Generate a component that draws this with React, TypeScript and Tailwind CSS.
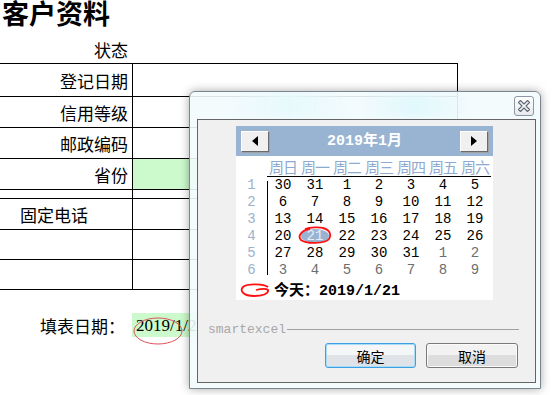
import React from 'react';

const cjk = "font-['Noto_Sans_CJK_SC',sans-serif]";
const mono = "font-['Liberation_Mono','Noto_Sans_CJK_SC',monospace]";

const rows = [
  { label: '登记日期', h: 'h-[33px]' },
  { label: '信用等级', h: 'h-[31px]' },
  { label: '邮政编码', h: 'h-[31px]' },
  { label: '省份', h: 'h-[31px]', green: true },
  { label: '', h: 'h-[9px]' },
  { label: '固定电话', h: 'h-[31px]', left: true },
  { label: '', h: 'h-[30px]' },
  { label: '', h: 'h-[30px]' },
];

const weekDays = ['周日', '周一', '周二', '周三', '周四', '周五', '周六'];

// [day, isOtherMonth]
const weeks: [number, boolean][][] = [
  [[30, false], [31, false], [1, false], [2, false], [3, false], [4, false], [5, false]],
  [[6, false], [7, false], [8, false], [9, false], [10, false], [11, false], [12, false]],
  [[13, false], [14, false], [15, false], [16, false], [17, false], [18, false], [19, false]],
  [[20, false], [21, false], [22, false], [23, false], [24, false], [25, false], [26, false]],
  [[27, false], [28, false], [29, false], [30, false], [31, false], [1, true], [2, true]],
  [[3, true], [4, true], [5, true], [6, true], [7, true], [8, true], [9, true]],
];

function ArrowButton({ dir }: { dir: 'left' | 'right' }) {
  return (
    <div className="w-[28px] h-[21px] bg-[#f0f0f0] border border-t-white border-l-white border-r-[#6a6a6a] border-b-[#6a6a6a] shadow-[1px_1px_0_#a0a0a0] flex items-center justify-center">
      <svg width="6" height="10" viewBox="0 0 6 10">
        {dir === 'left' ? <path d="M6 0 L0 5 L6 10 Z" fill="#000" /> : <path d="M0 0 L6 5 L0 10 Z" fill="#000" />}
      </svg>
    </div>
  );
}

function Calendar() {
  return (
    <div className="w-[257px] bg-white">
      <div className="h-[30px] bg-[#98b4d2] flex items-center justify-between px-[5px]">
        <ArrowButton dir="left" />
        <span className={`${mono} text-[15px] font-bold text-white leading-none`}>2019年1月</span>
        <ArrowButton dir="right" />
      </div>
      <div className="flex">
        <div className="w-[31px] shrink-0" />
        <div className="flex border-b border-black h-[21px] items-center">
          {weekDays.map((d) => (
            <div key={d} className={`${cjk} w-[32px] text-center text-[15px] leading-none text-[#8eaad0] tracking-[-1px]`}>
              {d}
            </div>
          ))}
        </div>
      </div>
      <div className="flex">
        <div className="w-[31px] shrink-0 flex flex-col">
          {weeks.map((_, i) => (
            <div key={i} className={`${mono} h-[17px] text-[14px] leading-[17px] text-center text-[#9cb2cc]`}>
              {i + 1}
            </div>
          ))}
        </div>
        <div className="w-px bg-black my-[4px]" />
        <div className="flex flex-col -ml-px">
          {weeks.map((w, i) => (
            <div key={i} className="flex h-[17px]">
              {w.map(([d, other], j) => {
                const today = i === 3 && j === 1;
                return (
                  <div
                    key={j}
                    className={`${mono} relative w-[32px] text-center text-[14px] leading-[17px] ${other ? 'text-[#6e6e6e]' : 'text-black'}`}
                  >
                    {today && (
                      <svg className="absolute -left-[1px] -top-[2px]" width="34" height="20" viewBox="0 0 34 20">
                        <ellipse cx="17" cy="10" rx="14" ry="7" fill="#98b4d2" />
                        <path
                          d="M7 3 C12 1, 22 1, 26 2 M24 2 C31 3, 34 8, 31 13 C27 18, 8 18, 3 14 C-1 10, 4 4, 12 3"
                          fill="none"
                          stroke="#ff1010"
                          strokeWidth="1.8"
                        />
                      </svg>
                    )}
                    <span className={`relative ${today ? 'text-[#e6edf5]' : ''}`}>{d}</span>
                  </div>
                );
              })}
            </div>
          ))}
        </div>
      </div>
      <div className="h-[21px] flex items-center pl-[4px] gap-[4px]">
        <svg width="30" height="16" viewBox="0 0 30 16">
          <path
            d="M28 5 C24 2, 8 1, 3 5 C-1 9, 4 14, 14 14 C22 14, 29 12, 28 8 C26 6, 20 7, 16 8"
            fill="none"
            stroke="#ff1010"
            strokeWidth="1.8"
          />
        </svg>
        <span className="text-[15px] font-bold leading-none text-black">
          <span className={cjk}>今天：</span>
          <span className={mono}>2019/1/21</span>
        </span>
      </div>
    </div>
  );
}

function CloseButton() {
  return (
    <div className="w-[20px] h-[20px] rounded-[3px] border border-[#8c97a3] bg-gradient-to-b from-white to-[#e8eaee] flex items-center justify-center">
      <svg width="14" height="14" viewBox="0 0 14 14">
        <path
          d="M1.5 3.5 L3.5 1.5 L7 5 L10.5 1.5 L12.5 3.5 L9 7 L12.5 10.5 L10.5 12.5 L7 9 L3.5 12.5 L1.5 10.5 L5 7 Z"
          fill="#f4f4f4"
          stroke="#5f6b78"
          strokeWidth="1.1"
          strokeLinejoin="round"
        />
      </svg>
    </div>
  );
}

function Dialog() {
  return (
    <div className="absolute left-[189px] top-[91px] w-[352px] h-[298px] rounded-t-[6px] border border-[#7d868e] bg-[#f2fbfd]/90 shadow-[0_0_10px_rgba(0,0,0,0.35)] flex flex-col pl-[7px] pr-[4px] pb-[5px] overflow-hidden">
      <div className="absolute left-[40px] top-0 w-[120px] h-[26px] bg-gradient-to-r from-transparent via-[#e6f9fc] to-transparent rounded-full blur-[4px]" />
      <div className="absolute left-[170px] top-[2px] w-[110px] h-[24px] bg-gradient-to-r from-transparent via-[#e0f8fc] to-transparent rounded-full blur-[5px]" />
      <div className="relative h-[27px] shrink-0 flex justify-end items-start pt-[4px] pr-[2px]">
        <CloseButton />
      </div>
      <div className={`relative flex-1 border border-[#646464] bg-[#f0f0f0] flex flex-col`}>
        <div className="pl-[38px] pt-[6px]">
          <Calendar />
        </div>
        <div className="mt-[22px] ml-[10px] mr-[16px] flex items-center h-[14px]">
          <span className={`${mono} text-[13px] leading-none text-[#a8a8a8]`}>smartexcel</span>
          <div className="flex-1 h-px bg-[#a0a0a0] ml-px" />
        </div>
        <div className="mt-[7px] mr-[17px] flex justify-end gap-[10px]">
          <button className={`${cjk} w-[91px] h-[25px] rounded-[3px] border border-[#3c9fe2] bg-gradient-to-b from-[#f4f6f8] from-50% to-[#dfe3e7] to-50% text-[14px] leading-none text-black shadow-[inset_0_0_0_1px_#a8dcf7]`}>
            确定
          </button>
          <button className={`${cjk} w-[92px] h-[25px] rounded-[3px] border border-[#7a7a7a] bg-gradient-to-b from-[#f2f2f2] from-50% to-[#dddddd] to-50% text-[14px] leading-none text-black shadow-[inset_0_0_0_1px_#fafafa]`}>
            取消
          </button>
        </div>
      </div>
    </div>
  );
}

export default function App() {
  return (
    <div className={`relative w-[552px] h-[395px] bg-white overflow-hidden ${cjk} text-black`}>
      <div className="h-[28px] pl-[2px] text-[27px] font-bold leading-[26px]">客户资料</div>
      <div className="h-[35px] w-[132px] pt-[12px] pr-[4px] text-right text-[17px] leading-[20px]">状态</div>

      <div className="w-[458px] border-t border-r border-black">
        {rows.map((r, i) => (
          <div key={i} className={`flex ${r.h} border-b border-black`}>
            <div
              className={`w-[133px] shrink-0 border-r border-black flex items-center text-[17px] leading-none ${
                r.left ? 'pl-[20px]' : 'justify-end pr-[4px]'
              }`}
            >
              {r.label}
            </div>
            <div className={`flex-1 ${r.green ? 'bg-[#ccfacc]' : ''}`} />
          </div>
        ))}
      </div>

      <div className="mt-[23px] flex h-[24px]">
        <div className="w-[132px] pl-[40px] flex items-center text-[17px] leading-none">填表日期：</div>
        <div className="relative w-[80px] bg-[#ccfacc] flex items-center pl-[4px] font-['Liberation_Serif',serif] text-[17px] leading-none">
          2019/1/21
          <svg className="absolute left-[1px] top-[4px]" width="52" height="30" viewBox="0 0 52 30">
            <ellipse cx="25" cy="14" rx="24" ry="13" fill="none" stroke="#e0505a" strokeWidth="1" />
          </svg>
        </div>
      </div>

      <Dialog />
    </div>
  );
}
